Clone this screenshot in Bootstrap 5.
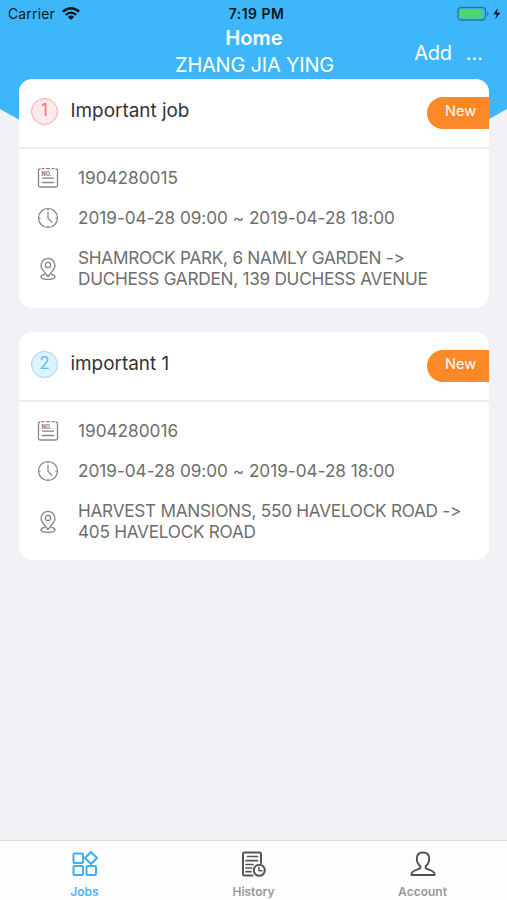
<!DOCTYPE html>
<html lang="en">
<head>
<meta charset="utf-8">
<meta name="viewport" content="width=device-width, initial-scale=1">
<title>Home</title>
<link rel="stylesheet" href="https://cdn.jsdelivr.net/npm/bootstrap@5.3.0/dist/css/bootstrap.min.css">
<style>
body{font-family:Inter,"Liberation Sans",sans-serif;font-feature-settings:"calt" 0;background:#f1f1f6;height:900px;overflow:hidden}
.screen{height:900px;background:linear-gradient(#3db7f9,#3db7f9) top/100% 109px no-repeat}
.peak{left:0;top:109px;width:507px;height:142px;background:#3db7f9;clip-path:polygon(0 0,100% 0,50% 100%)}
.status{height:26px;padding:1px 5px 0 8px;font-size:13.9px;line-height:26px;color:#0b1a24}
.carrier{letter-spacing:.2px}
.wifi{margin-left:7px}
.clock{font-weight:600;color:#06141d;letter-spacing:.5px;margin-left:3px}
.titles{height:53px;color:#fff}
.title-main{font-size:20.2px;font-weight:600;line-height:24px;letter-spacing:0;padding-left:1px}
.title-sub{font-size:20px;line-height:31px;letter-spacing:-.22px;padding-left:2px}
.actions{right:24px;top:39px;font-size:20px;line-height:28px;gap:14px}
.add{letter-spacing:-.25px}
.job{margin:0 18px 24px 19px;border-radius:13px;height:229px}
.job+.job{height:228px}
.job-head{height:70px;border-bottom:2px solid #ececee;padding:0 0 5px 12px}
.num{width:27px;height:27px;margin-top:1px;border:1.3px solid #ffa3aa;background:#ffeaea;color:#f4747c;font-size:17px}
.num.blue{border-color:#98d6f8;background:#def3fe;color:#62bdf0}
.job-name{font-size:18.9px;line-height:24px;margin-left:12.500px;color:#333}
.tag{width:62px;height:32px;border-radius:16px 0 0 16px;background:#fb8927;color:#fff;font-size:14.6px;line-height:29px;padding-left:5px;margin-top:5px}
.job-body{padding:9px 18px;color:#6e6e6e;font-size:17.2px;line-height:21px}
.line{min-height:40px}
.line span,.addr span{margin-bottom:2px}
.line svg,.addr svg{width:22px;height:22px;margin-right:19px;flex:none}
.date{letter-spacing:-.02px}
.addr{padding-top:9px;letter-spacing:-.26px}
.tabs{height:60px;border-top:1px solid #dcdce0;background:#fdfdfd;font-size:12px;font-weight:600;color:#989898;line-height:15px}
.tabs svg{width:28px;height:28px;margin-top:9px;margin-bottom:6px}
.tabs .on{color:#4ab6ee}
.t{white-space:nowrap}
</style>
<script src="https://cdn.jsdelivr.net/npm/bootstrap@5.3.0/dist/js/bootstrap.bundle.min.js"></script>
</head>
<body>
<svg width="0" height="0" class="d-none">
<symbol id="no" viewBox="0 0 22 22"><g fill="none" stroke="#858585" stroke-width="1.3" stroke-linecap="round"><path d="M3 2Q1.500 2 1.500 3.500V18.500Q1.500 20 3 20H19Q20.500 20 20.500 18.500V3.500Q20.500 2 19 2M5 1.700H7M9.500 1.700H12.500M15 1.700H17"/><path d="M5.500 11.200H16.500M5.500 15.500H16.500"/></g><text x="4.500" y="8.800" font-size="5.600" font-weight="700" fill="#777" textLength="10" lengthAdjust="spacingAndGlyphs">NO.</text></symbol>
<symbol id="time" viewBox="0 0 22 22"><g fill="none" stroke="#858585" stroke-width="1.200" stroke-linecap="round"><circle cx="11" cy="11" r="9.500"/><path d="M11 5V11.200L15 15.400M11 1.500V3M11 19V20.500M1.500 11H3.200M18.800 11H20.500"/></g></symbol>
<symbol id="pin" viewBox="0 0 22 22"><g fill="none" stroke="#858585" stroke-width="1.300" stroke-linecap="round" stroke-linejoin="round"><path d="M11 18.500C8.500 15 4 11.500 4 7.400A7 7 0 0 1 18 7.400C18 11.500 13.500 15 11 18.500Z"/><circle cx="11" cy="7" r="2.600"/><path d="M7.500 16.300C3 17 2.500 20.600 8 21.200Q11 21.600 14 21.200C19.500 20.600 19 17 14.500 16.300"/></g></symbol>
</svg>
<div class="screen d-flex flex-column position-relative">
<div class="peak position-absolute"></div>
<header class="position-relative">
<div class="status d-flex justify-content-between align-items-center position-relative">
<div class="d-flex align-items-center"><span class="carrier t">Carrier</span>
<svg class="wifi" width="18" height="13" viewBox="0 0 18 13"><g fill="none" stroke="#07141d" stroke-width="2.300"><path d="M.9 4.700Q9-2.200 17.100 4.700M3.800 7.900Q9 3.400 14.200 7.900"/></g><path d="M5.900 9.900Q9 7.300 12.100 9.900L9 13Z" fill="#07141d"/></svg></div>
<span class="clock position-absolute start-50 translate-middle-x t">7:19 PM</span>
<svg width="45" height="16" viewBox="0 0 45 16"><rect x="1" y="1.500" width="27.500" height="12.500" rx="3" fill="none" stroke="#28799f" stroke-width="1.300"/><rect x="2.700" y="3.200" width="22.500" height="9.100" rx="1.500" fill="#4cd964"/><path d="M30 5.800Q33 8 30 10.200Z" fill="#28799f"/><path d="M41 2L36.300 8.300H39.800L38.200 13.200L43.300 6.700H39.900Z" fill="#07141d"/></svg>
</div>
<div class="titles text-center"><div class="title-main t">Home</div><div class="title-sub t">ZHANG JIA YING</div></div>
<div class="actions position-absolute d-flex text-white"><span class="add">Add</span><span>...</span></div>
</header>
<main class="flex-grow-1 position-relative">
<section class="job bg-white">
<div class="job-head d-flex align-items-center"><span class="num rounded-circle d-flex align-items-center justify-content-center">1</span><span class="job-name">Important job</span><span class="tag ms-auto text-center">New</span></div>
<div class="job-body">
<div class="line d-flex align-items-center"><svg><use href="#no"/></svg><span>1904280015</span></div>
<div class="line d-flex align-items-center"><svg><use href="#time"/></svg><span class="date t">2019-04-28 09:00 ~ 2019-04-28 18:00</span></div>
<div class="addr d-flex align-items-center"><svg><use href="#pin"/></svg><span class="t">SHAMROCK PARK, 6 NAMLY GARDEN -&gt;<br>DUCHESS GARDEN, 139 DUCHESS AVENUE</span></div>
</div>
</section>
<section class="job bg-white">
<div class="job-head d-flex align-items-center"><span class="num blue rounded-circle d-flex align-items-center justify-content-center">2</span><span class="job-name">important 1</span><span class="tag ms-auto text-center">New</span></div>
<div class="job-body">
<div class="line d-flex align-items-center"><svg><use href="#no"/></svg><span>1904280016</span></div>
<div class="line d-flex align-items-center"><svg><use href="#time"/></svg><span class="date t">2019-04-28 09:00 ~ 2019-04-28 18:00</span></div>
<div class="addr d-flex align-items-center"><svg><use href="#pin"/></svg><span class="t">HARVEST MANSIONS, 550 HAVELOCK ROAD -&gt;<br>405 HAVELOCK ROAD</span></div>
</div>
</section>
</main>
<nav class="tabs row g-0 text-center">
<div class="col on d-flex flex-column align-items-center"><svg viewBox="0 0 28 28"><g fill="none" stroke="#3faeea" stroke-width="2" stroke-linejoin="round"><rect x="2.500" y="3.500" width="9.500" height="9.500" rx="1"/><rect x="2.500" y="16" width="9.500" height="9" rx="1"/><rect x="15.500" y="16" width="9.500" height="9" rx="1"/><path d="M20 2L26 8L20 14L14 8Z"/></g></svg><span>Jobs</span></div>
<div class="col d-flex flex-column align-items-center"><svg viewBox="0 0 28 28"><g fill="none" stroke="#555" stroke-width="2" stroke-linecap="round" stroke-linejoin="round"><path d="M12.500 25.500H4.500Q3 25.500 3 24V4Q3 2.500 4.500 2.500H19.500Q21 2.500 21 4V13"/><path d="M7.500 6.500H17.500M6 10.700H17.500M6 14.500H13M6 18H11.500M6 21.700H11" stroke-width="1.700"/><circle cx="19.300" cy="20.300" r="5.500"/><path d="M19 17.300V20.800H22" stroke-width="1.500"/></g></svg><span>History</span></div>
<div class="col d-flex flex-column align-items-center"><svg viewBox="0 0 28 28"><path d="M14 2.500C9.500 2.500 7.800 5.300 7.800 8.600C7.800 12 9.300 14.700 11.300 16.300V18.300C8.500 20 2.500 20.500 2.500 24V25H25.500V24C25.500 20.500 19.500 20 16.700 18.300V16.300C18.700 14.700 20.200 12 20.200 8.600C20.200 5.300 18.500 2.500 14 2.500Z" fill="none" stroke="#505050" stroke-width="1.900" stroke-linejoin="round"/></svg><span>Account</span></div>
</nav>
</div>
</body>
</html>
